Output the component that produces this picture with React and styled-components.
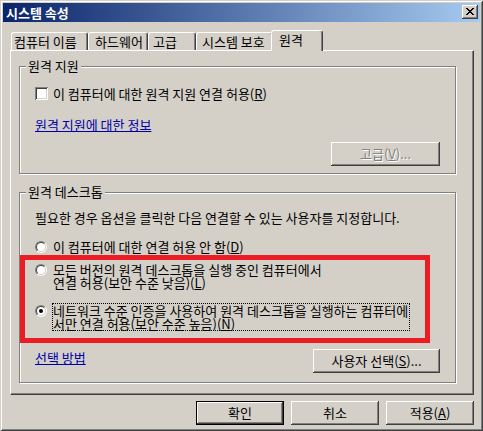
import React from 'react';
import styled, { createGlobalStyle } from 'styled-components';

const FONT = `"Noto Sans CJK KR", "Noto Sans", sans-serif`;
const FACE = '#d4d0c8';

const GlobalStyle = createGlobalStyle`
  html, body { margin: 0; padding: 0; background: ${FACE}; }
  body { font-family: ${FONT}; font-size: 13px; color: #000; }
  * { box-sizing: border-box; }
`;

const Window = styled.div`
  width: 483px;
  height: 431px;
  background: ${FACE};
  padding: 3px;
  display: flex;
  flex-direction: column;
  box-shadow: inset 1px 1px ${FACE}, inset -1px -1px #404040, inset 2px 2px #fff,
    inset -2px -2px #808080;
`;

const TitleBar = styled.div`
  height: 19px;
  flex: none;
  display: flex;
  align-items: flex-start;
  justify-content: space-between;
  padding: 0 2px 0 3px;
  background: linear-gradient(to right, #0a246a, #a6caf0);
`;

const Title = styled.div`
  color: #fff;
  font-weight: bold;
  font-size: 13px;
  line-height: 19px;
`;

const CloseButton = styled.div`
  width: 16px;
  height: 14px;
  margin-top: 2px;
  background: ${FACE};
  display: flex;
  align-items: center;
  justify-content: center;
  box-shadow: inset -1px -1px #404040, inset 1px 1px #fff, inset -2px -2px #808080;
  svg { display: block; margin: 0 1px 1px 0; }
`;

const Body = styled.div`
  flex: 1;
  display: flex;
  flex-direction: column;
  padding: 8px 6px 0 7px;
`;

const TabRow = styled.div`
  height: 20px;
  display: flex;
  align-items: flex-end;
  padding-left: 1px;
  position: relative;
  z-index: 1;
`;

const Tab = styled.div`
  width: ${(p) => p.$w}px;
  height: ${(p) => (p.$active ? 21 : 18)}px;
  margin: 0 ${(p) => (p.$active ? -2 : 0)}px ${(p) => (p.$active ? -1 : 0)}px;
  padding-left: ${(p) => p.$pl}px;
  background: ${FACE};
  border-top: 1px solid #fff;
  border-left: 1px solid #fff;
  border-right: 1px solid #404040;
  border-radius: 3px 3px 0 0;
  box-shadow: inset -1px 0 #808080;
  line-height: 17px;
  white-space: nowrap;
  position: relative;
  z-index: ${(p) => (p.$active ? 2 : 1)};
`;

const Panel = styled.div`
  height: 345px;
  flex: none;
  border-top: 1px solid #fff;
  border-left: 1px solid #fff;
  border-right: 1px solid #404040;
  border-bottom: 1px solid #404040;
  box-shadow: inset -1px -1px #808080;
  padding: 8px 17px 0 8px;
  display: flex;
  flex-direction: column;
`;

const Group = styled.fieldset`
  margin: ${(p) => p.$mt || 0}px 0 0;
  padding: 0;
  min-width: 0;
  border: 1px solid #808080;
  box-shadow: inset 1px 1px #fff, 1px 1px #fff;
`;

const Legend = styled.legend`
  margin-left: 6px;
  padding: 0 2px;
  line-height: 14px;
  background: ${FACE};
`;

const GroupBody = styled.div`
  padding: ${(p) => p.$pad};
  display: flex;
  flex-direction: column;
`;

const CheckRow = styled.label`
  display: flex;
  align-items: center;
  gap: 5px;
  height: 13px;
  line-height: 13px;
`;

const CheckBox = styled.span`
  width: 13px;
  height: 13px;
  flex: none;
  background: #fff;
  box-shadow: inset 1px 1px #808080, inset -1px -1px #fff, inset 2px 2px #404040,
    inset -2px -2px ${FACE};
`;

const Link = styled.a`
  display: block;
  width: fit-content;
  color: #0000a8;
  text-decoration: underline;
  line-height: 14px;
  margin-top: ${(p) => p.$mt || 0}px;
  cursor: pointer;
`;

const Button = styled.button`
  width: ${(p) => p.$w}px;
  height: 24px;
  flex: none;
  padding: 0;
  font-family: ${FONT};
  font-size: 13px;
  line-height: 22px;
  background: ${FACE};
  color: ${(p) => (p.disabled ? '#808080' : '#000')};
  text-shadow: ${(p) => (p.disabled ? '1px 1px #fff' : 'none')};
  border: ${(p) => (p.$default ? '1px solid #000' : 'none')};
  box-shadow: inset -1px -1px #404040, inset 1px 1px #fff, inset -2px -2px #808080;
  u { text-decoration: underline; }
`;

const ButtonRow = styled.div`
  display: flex;
  justify-content: ${(p) => p.$justify || 'flex-end'};
  align-items: flex-start;
  gap: ${(p) => p.$gap || 0}px;
  margin-top: ${(p) => p.$mt || 0}px;
`;

const Text = styled.div`
  line-height: 14px;
  margin-top: ${(p) => p.$mt || 0}px;
`;

const Highlight = styled.div`
  border: 5px solid #ec1c24;
  margin: 1px 10px 0 -15px;
  padding: 2px 0 7px 10px;
  display: flex;
  flex-direction: column;
`;

const RadioRow = styled.label`
  display: flex;
  align-items: flex-start;
  gap: 5px;
  margin-top: ${(p) => p.$mt || 0}px;
`;

const Radio = styled.span`
  width: 12px;
  height: 12px;
  flex: none;
  margin-top: ${(p) => p.$mt}px;
  border-radius: 50%;
  border: 1px solid;
  border-color: #808080 #fff #fff #808080;
  position: relative;
  &::before {
    content: '';
    position: absolute;
    inset: 0;
    border-radius: 50%;
    border: 1px solid;
    border-color: #404040 ${FACE} ${FACE} #404040;
    background: #fff;
  }
  &::after {
    content: '';
    position: absolute;
    left: 3px;
    top: 3px;
    width: 4px;
    height: 4px;
    border-radius: 50%;
    background: ${(p) => (p.$checked ? '#000' : 'transparent')};
  }
`;

const RadioLabel = styled.span`
  display: inline-block;
  white-space: nowrap;
  border: 1px dotted ${(p) => (p.$focus ? '#000' : 'transparent')};
  padding: 0 1px 0 0;
  line-height: ${(p) => p.$lh}px;
`;

const Footer = styled.div`
  display: flex;
  justify-content: flex-end;
  gap: 7px;
  margin-top: 6px;
`;

const CloseGlyph = () => (
  <svg width="8" height="7" viewBox="0 0 8 7" shapeRendering="crispEdges">
    {[
      [0, 0, 6], [1, 1, 4], [2, 2, 2], [3, 3, 0], [2, 4, 2], [1, 5, 4], [0, 6, 6],
    ].map(([x, y, d], i) => (
      <g key={i} fill="#000">
        <rect x={x} y={y} width="2" height="1" />
        {d > 0 && <rect x={x + d} y={y} width="2" height="1" />}
      </g>
    ))}
  </svg>
);

const tabs = [
  { label: '컴퓨터 이름', w: 77, pl: 2 },
  { label: '하드웨어', w: 60, pl: 6 },
  { label: '고급', w: 48, pl: 4 },
  { label: '시스템 보호', w: 77, pl: 5 },
  { label: '원격', w: 52, pl: 7, active: true },
];

export default function App() {
  return (
    <>
      <GlobalStyle />
      <Window>
        <TitleBar>
          <Title>시스템 속성</Title>
          <CloseButton>
            <CloseGlyph />
          </CloseButton>
        </TitleBar>
        <Body>
          <TabRow>
            {tabs.map((t) => (
              <Tab key={t.label} $w={t.w} $pl={t.pl} $active={t.active}>
                {t.label}
              </Tab>
            ))}
          </TabRow>
          <Panel>
            <Group>
              <Legend>원격 지원</Legend>
              <GroupBody $pad="14px 15px 7px 15px">
                <CheckRow>
                  <CheckBox />
                  <span>
                    이 컴퓨터에 대한 원격 지원 연결 허용(<u>R</u>)
                  </span>
                </CheckRow>
                <Link $mt={18}>원격 지원에 대한 정보</Link>
                <ButtonRow $mt={10}>
                  <Button $w={109} disabled>
                    고급(<u>V</u>)...
                  </Button>
                </ButtonRow>
              </GroupBody>
            </Group>
            <Group $mt={11}>
              <Legend>원격 데스크톱</Legend>
              <GroupBody $pad="12px 15px 9px 15px">
                <Text>필요한 경우 옵션을 클릭한 다음 연결할 수 있는 사용자를 지정합니다.</Text>
                <RadioRow $mt={15}>
                  <Radio $mt={1} />
                  <RadioLabel $lh={12}>
                    이 컴퓨터에 대한 연결 허용 안 함(<u>D</u>)
                  </RadioLabel>
                </RadioRow>
                <Highlight>
                  <RadioRow>
                    <Radio $mt={2} />
                    <RadioLabel $lh={13}>
                      모든 버전의 원격 데스크톱을 실행 중인 컴퓨터에서
                      <br />
                      연결 허용(보안 수준 낮음)(<u>L</u>)
                    </RadioLabel>
                  </RadioRow>
                  <RadioRow $mt={13}>
                    <Radio $mt={2} $checked />
                    <RadioLabel $lh={13} $focus>
                      네트워크 수준 인증을 사용하여 원격 데스크톱을 실행하는 컴퓨터에
                      <br />
                      서만 연결 허용(보안 수준 높음)(<u>N</u>)
                    </RadioLabel>
                  </RadioRow>
                </Highlight>
                <ButtonRow $justify="space-between" $mt={6}>
                  <Link $mt={2}>선택 방법</Link>
                  <Button $w={127}>
                    사용자 선택(<u>S</u>)...
                  </Button>
                </ButtonRow>
              </GroupBody>
            </Group>
          </Panel>
          <Footer>
            <Button $w={88} $default>
              확인
            </Button>
            <Button $w={88}>취소</Button>
            <Button $w={88}>
              적용(<u>A</u>)
            </Button>
          </Footer>
        </Body>
      </Window>
    </>
  );
}
